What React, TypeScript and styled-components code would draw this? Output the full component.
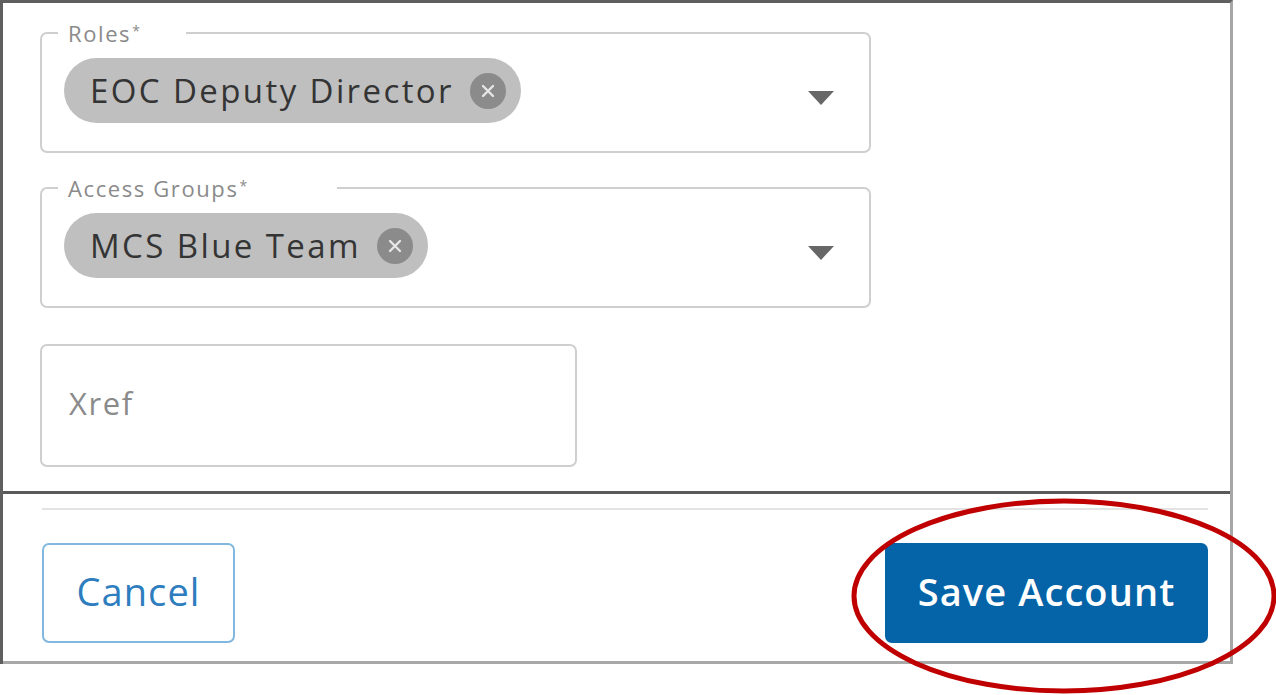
import React from "react";
import styled, { createGlobalStyle } from "styled-components";

const Global = createGlobalStyle`
  html, body { margin: 0; padding: 0; background: #ffffff; }
  body { font-family: "Open Sans", "Lato", sans-serif; }
  * { box-sizing: border-box; }
`;

const Page = styled.div`
  position: relative;
  width: 1276px;
  height: 695px;
  background: #fff;
`;

const Frame = styled.div`
  width: 1233px;
  border-top: 3px solid #5f5f5f;
  border-left: 3px solid #5f5f5f;
  border-right: 3px solid #a6a6a6;
  display: flex;
  flex-direction: column;
`;

const Body = styled.div`
  padding: 19px 0 24px 37px;
  border-bottom: 3px solid #5a5a5a;
  display: flex;
  flex-direction: column;
  gap: 24px;
`;

const Field = styled.fieldset`
  margin: 0;
  width: 831px;
  border: 2px solid #cfcfcf;
  border-radius: 7px;
  padding: 14px 35px 28px 22px;
  display: flex;
  align-items: center;
  gap: 12px;
`;

const Legend = styled.legend<{ $w: number }>`
  margin-left: -6px;
  padding: 0 0 0 10px;
  width: ${(p) => p.$w}px;
  font-size: 22px;
  line-height: 22px;
  letter-spacing: 1.6px;
  color: #8a8a8a;
  sup {
    font-size: 14px;
    margin-left: 1px;
    vertical-align: 6px;
    line-height: 0;
  }
`;

const Chips = styled.div`
  flex: 1;
  display: flex;
  gap: 10px;
`;

const Chip = styled.div`
  height: 65px;
  border-radius: 33px;
  background: #bfbfbf;
  display: inline-flex;
  align-items: center;
  padding: 0 15px 0 26px;
  gap: 16px;
  font-size: 33px;
  letter-spacing: 2.4px;
  color: #343434;
`;

const Close = styled.span`
  width: 36px;
  height: 36px;
  border-radius: 50%;
  background: #8b8b8b;
  display: flex;
  align-items: center;
  justify-content: center;
`;

const Caret = styled.span`
  width: 0;
  height: 0;
  margin-top: 14px;
  border-left: 13px solid transparent;
  border-right: 13px solid transparent;
  border-top: 14px solid #676767;
`;

const TextBox = styled.div`
  width: 537px;
  height: 123px;
  margin-top: 12px;
  border: 2px solid #cfcfcf;
  border-radius: 7px;
  display: flex;
  align-items: center;
  padding: 0 0 6px 27px;
  font-size: 31px;
  letter-spacing: 1.6px;
  color: #8a8a8a;
`;

const Footer = styled.div`
  padding: 14px 22px 18px 39px;
  border-bottom: 3px solid #a8a8a8;
  display: flex;
  flex-direction: column;
  gap: 33px;
`;

const Rule = styled.div`
  height: 2px;
  background: #e3e3e3;
`;

const Actions = styled.div`
  display: flex;
  justify-content: space-between;
`;

const Button = styled.button<{ $primary?: boolean }>`
  height: 100px;
  width: ${(p) => (p.$primary ? 323 : 193)}px;
  border-radius: 7px;
  padding: 0 0 4px;
  font-family: "Open Sans", "Lato", sans-serif;
  font-size: 38px;
  letter-spacing: 1.1px;
  font-weight: ${(p) => (p.$primary ? 600 : 500)};
  cursor: pointer;
  border: 2px solid ${(p) => (p.$primary ? "#0563a8" : "#82b8e0")};
  background: ${(p) => (p.$primary ? "#0563a8" : "#ffffff")};
  color: ${(p) => (p.$primary ? "#ffffff" : "#2d7dbf")};
`;

const Annotation = styled.svg`
  position: absolute;
  left: 850px;
  top: 497px;
  pointer-events: none;
`;

const X = () => (
  <svg width="16" height="16" viewBox="0 0 16 16">
    <path d="M3 3 L13 13 M13 3 L3 13" stroke="#e6e6e6" strokeWidth="2.4" strokeLinecap="round" />
  </svg>
);

export default function App() {
  return (
    <Page>
      <Global />
      <Frame>
        <Body>
          <Field>
            <Legend $w={128}>
              Roles<sup>*</sup>
            </Legend>
            <Chips>
              <Chip>
                EOC Deputy Director
                <Close>
                  <X />
                </Close>
              </Chip>
            </Chips>
            <Caret />
          </Field>
          <Field>
            <Legend $w={279}>
              Access Groups<sup>*</sup>
            </Legend>
            <Chips>
              <Chip>
                MCS Blue Team
                <Close>
                  <X />
                </Close>
              </Chip>
            </Chips>
            <Caret />
          </Field>
          <TextBox>Xref</TextBox>
        </Body>
        <Footer>
          <Rule />
          <Actions>
            <Button>Cancel</Button>
            <Button $primary>Save Account</Button>
          </Actions>
        </Footer>
      </Frame>
      <Annotation width="428" height="198" viewBox="0 0 428 198">
        <ellipse cx="214" cy="99" rx="210" ry="95" fill="none" stroke="#c00000" strokeWidth="5" />
      </Annotation>
    </Page>
  );
}
